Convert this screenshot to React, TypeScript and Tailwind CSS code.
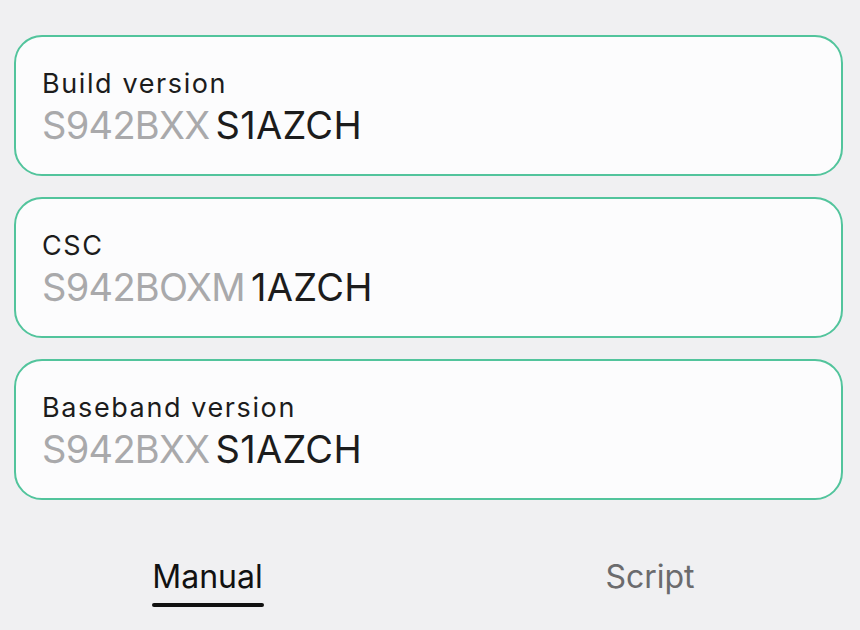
import React from 'react';

interface InfoRow {
    label: string;
    prefix: string;
    suffix: string;
}

const rows: InfoRow[] = [
    { label: 'Build version', prefix: 'S942BXX', suffix: 'S1AZCH' },
    { label: 'CSC', prefix: 'S942BOXM', suffix: '1AZCH' },
    { label: 'Baseband version', prefix: 'S942BXX', suffix: 'S1AZCH' },
];

export default function App() {
    return (
        <div
            className="w-[860px] h-[630px] bg-[#f0f0f2] overflow-hidden flex flex-col"
            style={{ fontFamily: 'Inter, "Open Sans", sans-serif' }}
        >
            {/* Cards */}
            <div className="flex flex-col gap-[21px] pt-[35px] pl-[14px] pr-[17px]">
                {rows.map(row => (
                    <div
                        key={row.label}
                        className="h-[141px] rounded-[28px] border-2 border-[#52c49c] bg-[#fcfcfd] pl-[26px] pt-[29px]"
                    >
                        <div className="text-[27px] leading-[36px] tracking-[1.6px] text-[#1c1c1c]">{row.label}</div>
                        <div className="text-[38px] leading-[46px] flex gap-[6px]">
                            <span className="text-[#a9a9ab] tracking-[-0.7px]">{row.prefix}</span>
                            <span className="text-[#1c1c1c] tracking-[0.3px]">{row.suffix}</span>
                        </div>
                    </div>
                ))}
            </div>

            {/* Tabs */}
            <div className="grid grid-cols-[415px_1fr] mt-[57px]">
                <div className="flex justify-center">
                    <div className="flex flex-col items-center">
                        <span className="text-[32px] leading-[40px] text-[#111]">Manual</span>
                        <div className="mt-[6px] h-[4px] w-[112px] rounded-full bg-[#111]" />
                    </div>
                </div>
                <div className="flex justify-center pl-[25px]">
                    <span className="text-[32px] leading-[40px] text-[#6b6b6d]">Script</span>
                </div>
            </div>
        </div>
    );
}
